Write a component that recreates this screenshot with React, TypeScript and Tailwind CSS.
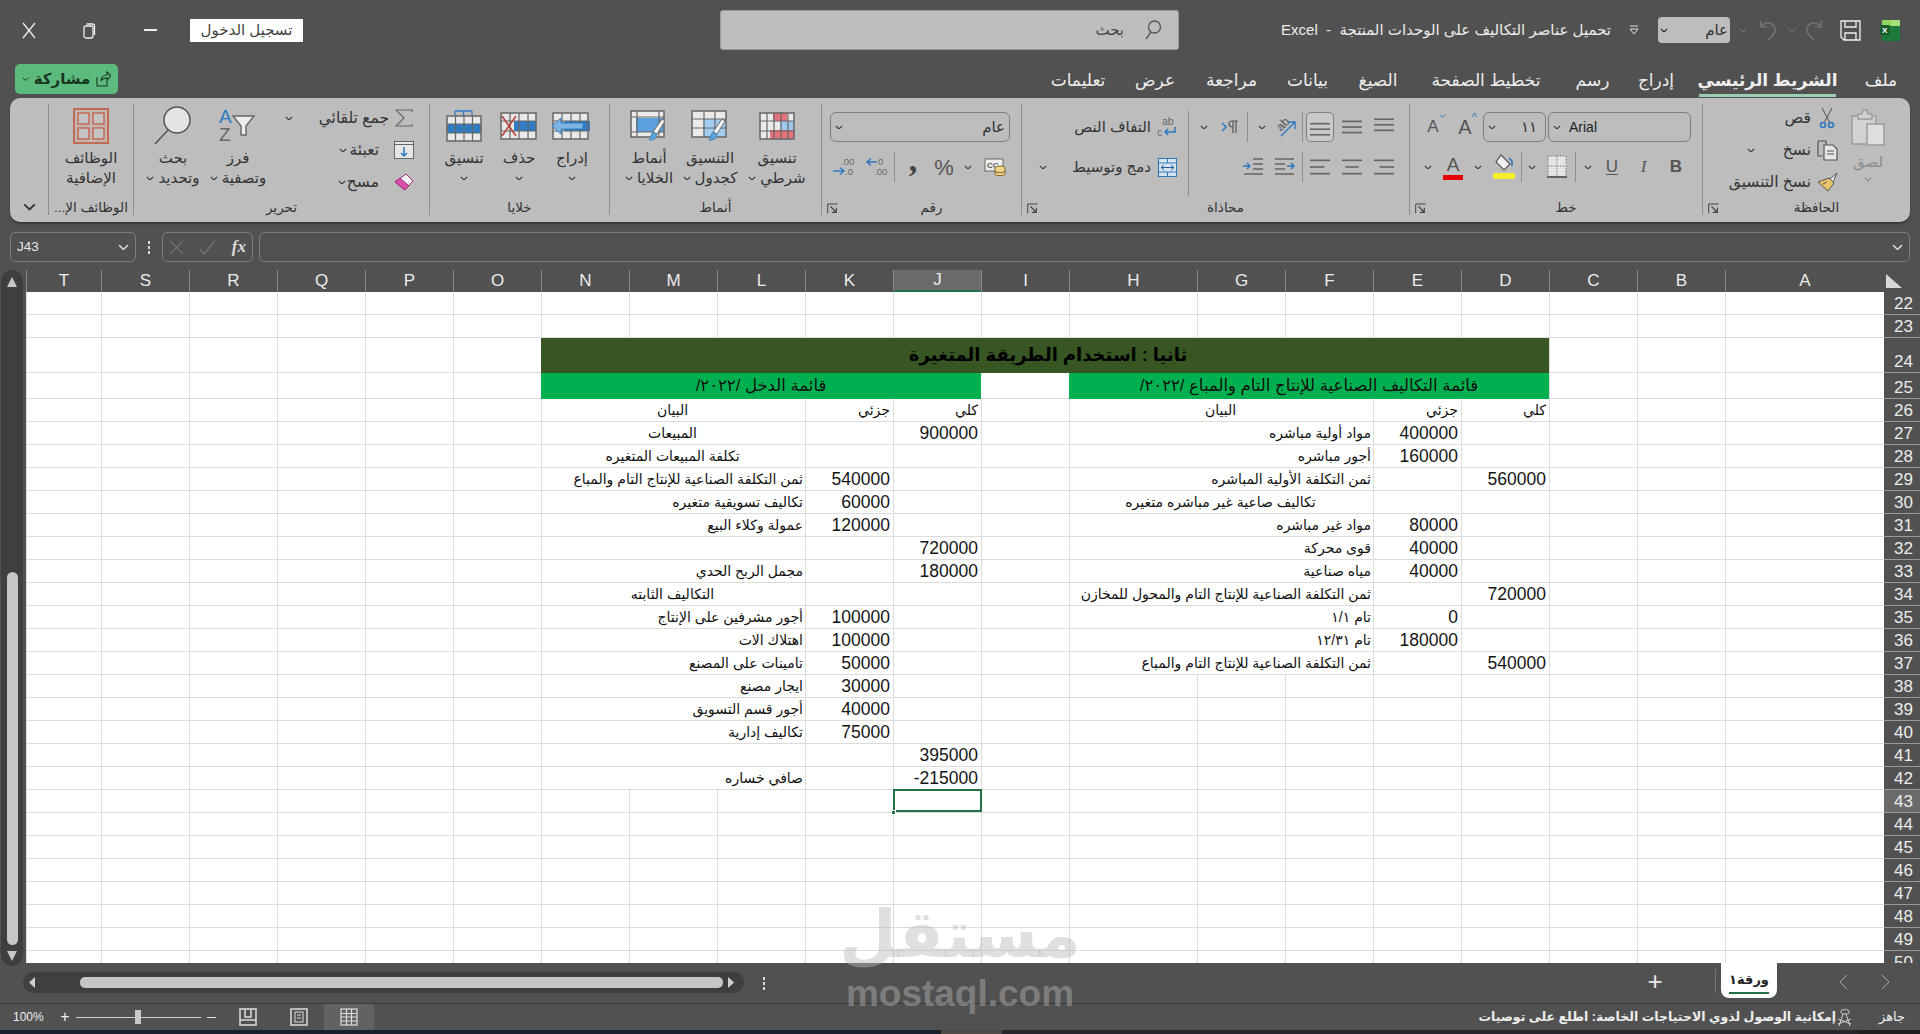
import React from "react";

const BL = "#2b78bf";

const Chev = ({ c = "#3a3a3a", w = 9 }: { c?: string; w?: number }) => (
  <svg width={w} height={w * 0.6} viewBox="0 0 10 6" fill="none"><path d="M1 1l4 4 4-4" stroke={c} strokeWidth="1.4" /></svg>
);
const Launcher = () => (
  <svg width="11" height="11" viewBox="0 0 11 11" fill="none"><path d="M10.5 1H.7v9.3" stroke="#444" /><path d="M3.5 3.5l5.5 5.5M9.3 4.8v4.5H4.8" stroke="#444" strokeWidth="1.2" /></svg>
);
const Slot = ({ className = "", children }: { className?: string; children?: React.ReactNode }) => (
  <div className={"flex items-center justify-center shrink-0 " + className}>{children}</div>
);
const Sep = ({ className = "" }: { className?: string }) => <div className={"w-px h-[30px] bg-[#8e8e8e] shrink-0 " + className} />;

const Lines = ({ ys, x = [[0, 18], [0, 18], [0, 18]] }: { ys: number[]; x?: number[][] }) => (
  <svg width="20" height="20" viewBox="0 0 18 18">
    {ys.map((y, i) => <line key={i} x1={x[i][0]} x2={x[i][1]} y1={y} y2={y} stroke="#666" strokeWidth="1.5" />)}
  </svg>
);

const Brush = ({ x = 0, y = 0, c = "#5ba3d9" }: { x?: number; y?: number; c?: string }) => (
  <g transform={`translate(${x} ${y})`}>
    <path d="M15 0l3 2-8 13-4-2z" fill="#f4f4f4" stroke="#666" strokeWidth="1" />
    <path d="M6 13l4 2.5c0 4-3 6-8 5.5 2-1.500 1.500-6 4-8z" fill={c} stroke="#3c7fb3" strokeWidth="0.8" />
  </g>
);

const GridLines = ({ x, y, w, h, cols, rows, s = "#666" }: { x: number; y: number; w: number; h: number; cols: number[]; rows: number[]; s?: string }) => (
  <g stroke={s} fill="none" strokeWidth="1.5">
    <rect x={x} y={y} width={w} height={h} />
    {cols.map((c) => <line key={c} x1={x + c} x2={x + c} y1={y} y2={y + h} strokeWidth="1.2" />)}
    {rows.map((r) => <line key={r} y1={y + r} y2={y + r} x1={x} x2={x + w} strokeWidth="1.2" />)}
  </g>
);

const IInsert = () => (
  <svg width="40" height="28" viewBox="0 0 40 28">
    <rect x="1" y="1" width="35" height="26" fill="#e8e8e8" />
    <rect x="12" y="9" width="26" height="10" fill="#2f7cc4" />
    <GridLines x={1} y={1} w={35} h={26} cols={[9, 18, 27]} rows={[8, 18]} />
    <path d="M0 14l9-8v5h22v6H9v5z" fill="#7fb3e0" stroke="#2f7cc4" />
  </svg>
);
const IDelete = () => (
  <svg width="38" height="28" viewBox="0 0 38 28">
    <rect x="1" y="1" width="35" height="26" fill="#e8e8e8" />
    <rect x="14" y="9" width="22" height="10" fill="#2f7cc4" />
    <GridLines x={1} y={1} w={35} h={26} cols={[9, 18, 27]} rows={[8, 18]} />
    <path d="M2 4l14 20M16 4L2 24" stroke="#b8443c" strokeWidth="1.6" />
  </svg>
);
const IFormat = () => (
  <svg width="36" height="32" viewBox="0 0 36 32">
    <path d="M9 1h17M17.500 1v5M9 5V1M26 5V1" stroke="#2f7cc4" strokeWidth="1.3" fill="none" />
    <rect x="1" y="6" width="34" height="25" fill="#e8e8e8" />
    <rect x="1" y="14" width="34" height="9" fill="#2f7cc4" />
    <GridLines x={1} y={6} w={34} h={25} cols={[8.5, 17, 25.5]} rows={[8, 17]} />
  </svg>
);
const ICond = () => (
  <svg width="36" height="28" viewBox="0 0 36 28">
    <rect x="1" y="1" width="34" height="26" fill="#eaeaea" />
    <rect x="14" y="1" width="14" height="8" fill="#e8727a" />
    <rect x="21" y="9" width="14" height="9" fill="#9fc9ec" />
    <rect x="11" y="18" width="24" height="9" fill="#e8727a" />
    <GridLines x={1} y={1} w={34} h={26} cols={[7, 14, 21, 28]} rows={[8, 18]} />
  </svg>
);
const ITable = () => (
  <svg width="38" height="32" viewBox="0 0 38 32">
    <rect x="1" y="1" width="34" height="26" fill="#eaeaea" />
    <rect x="12" y="9" width="23" height="18" fill="#a3cdf0" />
    <GridLines x={1} y={1} w={34} h={26} cols={[12, 23]} rows={[8, 17]} />
    <Brush x={16} y={9} />
  </svg>
);
const ICellS = () => (
  <svg width="38" height="32" viewBox="0 0 38 32">
    <rect x="1" y="1" width="33" height="26" fill="#eaeaea" />
    <rect x="6" y="8" width="28" height="14" fill="#5ba0dc" />
    <GridLines x={1} y={1} w={33} h={26} cols={[6, 28]} rows={[6, 21]} />
    <Brush x={17} y={9} />
  </svg>
);
const IPaste = () => (
  <svg width="36" height="40" viewBox="0 0 36 40" fill="none">
    <path d="M23 8h3v28H2V8h5" fill="#d2d2d2" stroke="#9c9c9c" strokeWidth="1.5" />
    <path d="M8 6h4l1-4h4l1 4h4v5H8z" fill="#d2d2d2" stroke="#9c9c9c" strokeWidth="1.5" />
    <rect x="17" y="16" width="17" height="21" fill="#dedede" stroke="#9c9c9c" strokeWidth="1.5" />
  </svg>
);
const IScissors = () => (
  <svg width="16" height="22" viewBox="0 0 16 22" fill="none">
    <path d="M3 1l7.500 14M13 1L5.500 15" stroke="#666" strokeWidth="1.2" />
    <circle cx="4" cy="18" r="2.500" stroke={BL} strokeWidth="1.600" />
    <circle cx="12" cy="18" r="2.500" stroke={BL} strokeWidth="1.600" />
  </svg>
);
const ICopy = () => (
  <svg width="21" height="21" viewBox="0 0 21 21" fill="none">
    <path d="M1 1h8v4M6 16H1V1" stroke="#555" strokeWidth="1.200" />
    <path d="M7 5h9l4 4v11H7z" fill="#e6e6e6" stroke="#555" strokeWidth="1.200" />
    <path d="M10 11h7M10 14h7" stroke="#555" />
  </svg>
);
const IPainter = () => (
  <svg width="21" height="20" viewBox="0 0 21 20" fill="none">
    <path d="M20 1l-7 6 3 3z" fill="#eee" stroke="#555" />
    <path d="M12 6l5 5-6 8-10-9z" fill="#e9c46a" stroke="#555" />
    <path d="M6 12l4-2" stroke="#555" />
  </svg>
);
const IFillColor = () => (
  <svg width="24" height="28" viewBox="0 0 24 28">
    <path d="M9 2l9 9-6 6-8-8z" fill="#eee" stroke="#555" strokeWidth="1.200" />
    <path d="M17 5l3 3v5" stroke={BL} strokeWidth="1.600" fill="none" />
    <rect x="1" y="20" width="22" height="6" fill="#f5f02e" />
  </svg>
);
const IBorders = () => (
  <svg width="20" height="24" viewBox="0 0 20 24">
    <rect x="1" y="1" width="18" height="20" fill="#e4e4e4" />
    <path d="M1 1h18M1 1v20M19 1v20M10 1v20M1 11h18" stroke="#777" strokeDasharray="1.500 1.500" fill="none" />
    <path d="M0 22h20" stroke="#444" strokeWidth="1.500" />
  </svg>
);
const IOrient = () => (
  <svg width="22" height="22" viewBox="0 0 22 22" fill="none">
    <text x="1" y="12" fontSize="12" fill="#555" transform="rotate(-45 8 8)" className="[font-family:'Liberation_Sans',sans-serif]">ab</text>
    <path d="M6 20L20 6M13 6h7v7" stroke={BL} strokeWidth="1.400" />
  </svg>
);
const IRtl = () => (
  <svg width="18" height="14" viewBox="0 0 18 14" fill="none">
    <path d="M1 3l4 4-4 4" stroke={BL} strokeWidth="1.500" />
    <path d="M11 1h6M11 1a3 3 0 000 6h1M12 1v12M15 1v12" stroke="#555" strokeWidth="1.200" />
  </svg>
);
const IIndent = ({ flip }: { flip?: boolean }) => (
  <svg width="20" height="18" viewBox="0 0 20 18" fill="none">
    {flip ? (
      <>
        <path d="M10 1h10M10 6h10M10 11h10M1 16h19" stroke="#666" strokeWidth="1.400" />
        <path d="M0 8h7M4 5l3 3-3 3" stroke={BL} strokeWidth="1.400" />
      </>
    ) : (
      <>
        <path d="M0 1h19M0 6h10M0 11h10M0 16h19" stroke="#666" strokeWidth="1.400" />
        <path d="M12 8h7M16 5l3 3-3 3" stroke={BL} strokeWidth="1.400" />
      </>
    )}
  </svg>
);
const IWrap = () => (
  <svg width="20" height="21" viewBox="0 0 20 21" fill="none">
    <text x="5" y="8" fontSize="10.500" fill="#666" className="[font-family:'Liberation_Sans',sans-serif]">ab</text>
    <text x="0" y="19" fontSize="10.500" fill="#666" className="[font-family:'Liberation_Sans',sans-serif]">c</text>
    <path d="M18 10v5h-10M11 12l-3 3 3 3" stroke={BL} strokeWidth="1.500" />
  </svg>
);
const IMerge = () => (
  <svg width="19" height="19" viewBox="0 0 19 19" fill="none">
    <rect x="0.500" y="0.500" width="18" height="18" fill="#d7e4f0" stroke={BL} />
    <path d="M0 5h19M0 14h19M9.500 0v5M9.500 14v5" stroke={BL} />
    <path d="M3 9.500h13M6 7l-3 2.500L6 12M13 7l3 2.500-3 2.500" stroke="#1d5f9c" />
  </svg>
);
const IAcct = () => (
  <svg width="22" height="18" viewBox="0 0 22 18" fill="none">
    <rect x="1" y="1" width="18" height="12" fill="#eee" stroke="#666" />
    <text x="3" y="10" fontSize="8" fontWeight="700" fill="#555" className="[font-family:'Liberation_Sans',sans-serif]">CC</text>
    <ellipse cx="16" cy="10" rx="5" ry="2" fill="#f2d68c" stroke="#7a6320" />
    <path d="M11 10v6c0 2 10 2 10 0v-6" fill="#f2d68c" stroke="#7a6320" />
    <path d="M11 13c0 2 10 2 10 0" stroke="#7a6320" />
  </svg>
);
const IDec = ({ inc }: { inc?: boolean }) => (
  <svg width="22" height="20" viewBox="0 0 22 20" fill="none">
    <text x={inc ? 8 : 12} y="8" fontSize="9.500" fill="#666" className="[font-family:'Liberation_Sans',sans-serif]">{inc ? ".00" : "0"}</text>
    <text x={inc ? 12 : 8} y="18" fontSize="9.500" fill="#666" className="[font-family:'Liberation_Sans',sans-serif]">{inc ? ".0" : ".00"}</text>
    {inc ? <path d="M0 14h11M7 10.500l4 3.500-4 3.500" stroke={BL} strokeWidth="1.300" /> : <path d="M1 5h10M5 1.500L1 5l4 3.500" stroke={BL} strokeWidth="1.300" />}
  </svg>
);
const ISum = () => (
  <svg width="18" height="18" viewBox="0 0 18 18" fill="none"><path d="M17 3V1H1l8 8-8 8h16v-2" stroke="#666" strokeWidth="1.200" /></svg>
);
const IFill = () => (
  <svg width="20" height="18" viewBox="0 0 20 18" fill="none">
    <rect x="0.500" y="0.500" width="19" height="17" fill="#e6e6e6" stroke="#666" />
    <path d="M0 3.500h20" stroke="#666" />
    <path d="M10 6v9M7 12l3 3 3-3" stroke={BL} strokeWidth="1.500" />
  </svg>
);
const IEraser = () => (
  <svg width="20" height="18" viewBox="0 0 20 18" fill="none">
    <path d="M12 1l7 7-8 9-10-8z" fill="#f1f1f1" stroke="#a02d7e" />
    <path d="M6 5l9 8-4 4-10-8z" fill="#d94fa7" stroke="#a02d7e" />
  </svg>
);
const ISort = () => (
  <svg width="38" height="38" viewBox="0 0 38 38" fill="none" className="[font-family:'Liberation_Sans',sans-serif]">
    <text x="0" y="16" fontSize="19" fill={BL}>A</text>
    <text x="0" y="34" fontSize="19" fill="#666">Z</text>
    <path d="M14 9h21l-8 10v9h-5V19z" fill="#ececec" stroke="#666" strokeWidth="1.400" />
  </svg>
);
const IFind = () => (
  <svg width="40" height="40" viewBox="0 0 40 40" fill="none">
    <circle cx="24" cy="14" r="13" fill="#e4e4e4" stroke="#555" strokeWidth="1.500" />
    <path d="M15 24L2 38" stroke="#555" strokeWidth="1.500" />
  </svg>
);
const IAddins = () => (
  <svg width="36" height="36" viewBox="0 0 36 36" fill="none">
    <rect x="1" y="1" width="34" height="34" stroke="#c36a54" strokeWidth="2" fill="#cfa99e" fillOpacity="0.3" />
    <rect x="5" y="5" width="11" height="11" stroke="#c36a54" strokeWidth="1.500" fill="#c4c4c4" />
    <rect x="20" y="5" width="11" height="11" stroke="#c36a54" strokeWidth="1.500" fill="#c4c4c4" />
    <rect x="5" y="20" width="11" height="11" stroke="#c36a54" strokeWidth="1.500" fill="#c4c4c4" />
    <rect x="20" y="20" width="11" height="11" stroke="#c36a54" strokeWidth="1.500" fill="#c4c4c4" />
  </svg>
);
const ISave = () => (
  <svg width="21" height="21" viewBox="0 0 21 21" fill="none">
    <path d="M1 1h19v19H4l-3-3z" stroke="#f0f0f0" strokeWidth="1.300" />
    <path d="M5 1v6h11V1M5 20v-7h11v7" stroke="#f0f0f0" strokeWidth="1.300" />
  </svg>
);
const IExcel = () => (
  <svg width="20" height="21" viewBox="0 0 20 21">
    <rect x="2" y="0" width="18" height="7" rx="1" fill="#8fd85c" />
    <rect x="11" y="0" width="9" height="7" rx="1" fill="#a7e07a" />
    <rect x="2" y="6" width="18" height="15" rx="1" fill="#1c7a3b" />
    <rect x="0" y="5" width="10" height="10" rx="1" fill="#185c2e" />
    <text x="2" y="13" fontSize="8" fontWeight="700" fill="#fff" className="[font-family:'Liberation_Sans',sans-serif]">X</text>
  </svg>
);

const Big = ({ className = "", icon, l1, l2, chev }: { className?: string; icon: React.ReactNode; l1: string; l2?: string; chev?: boolean }) => (
  <div className={"flex flex-col items-center shrink-0 whitespace-nowrap text-[15px] text-[#333] " + className}>
    <div className="h-[44px] flex items-center justify-center">{icon}</div>
    <div className="h-[20px] leading-[20px]">{l1}</div>
    <div className="h-[20px] leading-[20px] flex items-center gap-[4px]">
      {l2 && <span>{l2}</span>}
      {chev && <Chev w={8} />}
    </div>
  </div>
);

const Group = ({ className = "", label, launcher, children }: { className?: string; label: string; launcher?: boolean; children: React.ReactNode }) => (
  <div className={"shrink-0 h-[111px] border-l border-[#8e8e8e] flex flex-col " + className}>
    <div className="h-[98px] flex">{children}</div>
    <div className="h-[13px] flex items-center text-[13.500px] text-[#333]">
      <div className="flex-1 text-center whitespace-nowrap">{label}</div>
      {launcher && <Slot className="w-[20px]"><Launcher /></Slot>}
    </div>
  </div>
);

const Small = ({ icon, text, tw, chev, cw, pad = "" }: { icon: React.ReactNode; text: string; tw: string; chev?: boolean; cw?: string; pad?: string }) => (
  <div className="h-[24px] flex items-center text-[15.500px] text-[#333] whitespace-nowrap">
    <Slot className={pad}>{icon}</Slot>
    <span className={tw}>{text}</span>
    {chev && <Slot className={cw}><Chev w={8} /></Slot>}
  </div>
);

const Box = ({ className = "", children }: { className?: string; children: React.ReactNode }) => (
  <div className={"h-[30px] shrink-0 rounded-[6px] border border-[#7f7f7f] flex items-center justify-between px-[4px] " + className}>{children}</div>
);

const Ribbon = () => (
  <div className="mx-[10px] h-[124px] rounded-[10px] bg-[#bdbdbd] pt-[6px] flex shadow-[0_2px_2px_rgba(0,0,0,0.3)]">
    <Group className="w-[208px]" label="الحافظة" launcher>
      <div className="mr-[22px] w-[40px] shrink-0 flex flex-col items-center pt-[4px] text-[#8b8b8b] text-[15px]">
        <IPaste />
        <div className="mt-[5px] leading-[18px]">لصق</div>
        <div className="mt-[6px]"><Chev c="#8b8b8b" w={8} /></div>
      </div>
      <div className="pr-[10px] pt-[2px] flex flex-col gap-[8px]">
        <Small icon={<IScissors />} text="قص" tw="" pad="w-[22px] ml-[5px]" />
        <Small icon={<ICopy />} text="نسخ" tw="w-[55px]" chev cw="w-[10px]" pad="w-[22px] ml-[5px]" />
        <Small icon={<IPainter />} text="نسخ التنسيق" tw="" pad="w-[22px] ml-[5px]" />
      </div>
    </Group>
    <Group className="w-[293px]" label="خط" launcher>
      <div className="pt-[8px] flex flex-col gap-[10px]">
        <div className="flex">
          <Box className="mr-[11px] w-[143px] flex-row-reverse [font-family:'Liberation_Sans',sans-serif] text-[14px] text-[#222]">
            <span dir="ltr" className="flex items-center gap-[8px]"><Chev w={8} /><span>Arial</span></span>
            <span />
          </Box>
          <Box className="mr-[2px] w-[63px]">
            <span className="text-[15px] text-[#333] mr-[4px]">١١</span>
            <Chev w={8} />
          </Box>
          <Slot className="w-[32px] mr-[2px] text-[#555] text-[20px] h-[30px] [font-family:'Liberation_Sans',sans-serif]">
            <span className="relative">A<span className="absolute left-full top-[-3px] text-[11px] text-[#2b78bf]">^</span></span>
          </Slot>
          <Slot className="w-[32px] text-[#555] text-[17px] h-[30px] [font-family:'Liberation_Sans',sans-serif]">
            <span className="relative">A<span className="absolute left-full top-[0px]"><Chev c={BL} w={7} /></span></span>
          </Slot>
        </div>
        <div className="flex h-[30px] items-center pr-[10px]">
          <Slot className="w-[32px] font-bold text-[17px] text-[#555] [font-family:'Liberation_Sans',sans-serif]">B</Slot>
          <Slot className="w-[33px] italic text-[17px] text-[#555] [font-family:'Liberation_Serif',serif]">I</Slot>
          <Slot className="w-[30px] underline underline-offset-2 text-[17px] text-[#555] [font-family:'Liberation_Sans',sans-serif]">U</Slot>
          <Slot className="w-[18px]"><Chev w={8} /></Slot>
          <Sep className="mr-[3px]" />
          <Slot className="w-[36px]"><IBorders /></Slot>
          <Slot className="w-[14px]"><Chev w={8} /></Slot>
          <Sep className="mr-[3px]" />
          <Slot className="w-[34px]"><IFillColor /></Slot>
          <Slot className="w-[18px]"><Chev w={8} /></Slot>
          <Slot className="w-[32px] flex-col leading-none text-[19px] text-[#555] [font-family:'Liberation_Sans',sans-serif]">
            A
            <span className="w-[20px] h-[5px] bg-[#e30000] mt-[1px]" />
          </Slot>
          <Slot className="w-[18px]"><Chev w={8} /></Slot>
        </div>
      </div>
    </Group>
    <Group className="w-[388px]" label="محاذاة" launcher>
      <div className="w-[221px] h-[85px] shrink-0 border-l border-[#8e8e8e] mt-[7px] pt-[1px] flex flex-col gap-[10px]">
        <div className="flex h-[30px] items-center pr-[9px]">
          <Slot className="w-[32px]"><Lines ys={[2, 7, 12]} /></Slot>
          <Slot className="w-[32px]"><Lines ys={[4, 9, 14]} /></Slot>
          <Slot className="w-[28px] h-[30px] mr-[2px] rounded-[5px] bg-[#c9c9c9] border border-[#7f7f7f]"><Lines ys={[6, 11, 16]} /></Slot>
          <Sep className="mr-[3px]" />
          <Slot className="w-[32px]"><IOrient /></Slot>
          <Slot className="w-[16px]"><Chev w={8} /></Slot>
          <Sep className="mr-[6px]" />
          <Slot className="w-[34px]"><IRtl /></Slot>
          <Slot className="w-[18px]"><Chev w={8} /></Slot>
        </div>
        <div className="flex h-[30px] items-center pr-[9px]">
          <Slot className="w-[32px]"><Lines ys={[3, 9, 15]} x={[[0, 18], [5, 18], [0, 18]]} /></Slot>
          <Slot className="w-[32px]"><Lines ys={[3, 9, 15]} x={[[0, 18], [3, 15], [0, 18]]} /></Slot>
          <Slot className="w-[32px]"><Lines ys={[3, 9, 15]} x={[[0, 18], [0, 13], [0, 18]]} /></Slot>
          <Sep className="mr-[1px]" />
          <Slot className="w-[34px]"><IIndent /></Slot>
          <Slot className="w-[30px]"><IIndent flip /></Slot>
        </div>
      </div>
      <div className="pt-[8px] flex flex-col gap-[10px] text-[15px] text-[#333] whitespace-nowrap">
        <div className="flex h-[30px] items-center pr-[5px]">
          <Slot className="w-[32px]"><IWrap /></Slot>
          <span>التفاف النص</span>
        </div>
        <div className="flex h-[30px] items-center pr-[5px]">
          <Slot className="w-[32px]"><IMerge /></Slot>
          <span className="w-[94px]">دمج وتوسيط</span>
          <Slot className="w-[28px]"><Chev w={8} /></Slot>
        </div>
      </div>
    </Group>
    <Group className="w-[200px]" label="رقم" launcher>
      <div className="pt-[8px] flex flex-col gap-[10px]">
        <Box className="mr-[11px] w-[180px] text-[15px] text-[#333]">
          <span>عام</span>
          <Chev w={8} />
        </Box>
        <div className="flex h-[30px] items-center pr-[10px]">
          <Slot className="w-[32px]"><IAcct /></Slot>
          <Slot className="w-[22px]"><Chev w={8} /></Slot>
          <Slot className="w-[26px] text-[22px] text-[#555] [font-family:'Liberation_Sans',sans-serif]">%</Slot>
          <Slot className="w-[36px] text-[34px] font-bold leading-none pb-[14px] text-[#444] [font-family:'Liberation_Serif',serif]">,</Slot>
          <Sep />
          <Slot className="w-[34px]"><IDec /></Slot>
          <Slot className="w-[32px]"><IDec inc /></Slot>
        </div>
      </div>
    </Group>
    <Group className="w-[212px]" label="أنماط">
      <div className="pr-[11px] flex">
        <Big className="w-[66px]" icon={<ICond />} l1="تنسيق" l2="شرطي" chev />
        <Big className="w-[68px]" icon={<ITable />} l1="التنسيق" l2="كجدول" chev />
        <Big className="w-[54px]" icon={<ICellS />} l1="أنماط" l2="الخلايا" chev />
      </div>
    </Group>
    <Group className="w-[180px]" label="خلايا">
      <div className="pr-[10px] flex">
        <Big className="w-[54px]" icon={<IInsert />} l1="إدراج" chev />
        <Big className="w-[52px]" icon={<IDelete />} l1="حذف" chev />
        <Big className="w-[58px]" icon={<IFormat />} l1="تنسيق" chev />
      </div>
    </Group>
    <Group className="w-[296px]" label="تحرير">
      <div className="mr-[12px] w-[139px] shrink-0 pt-[2px] flex flex-col gap-[8px]">
        <Small icon={<ISum />} text="جمع تلقائي" tw="w-[89px] mr-[2px]" chev cw="w-[22px]" pad="w-[26px]" />
        <Small icon={<IFill />} text="تعبئة" tw="w-[30px] mr-[12px]" chev cw="w-[12px]" pad="w-[26px]" />
        <Small icon={<IEraser />} text="مسح" tw="w-[27px] mr-[12px]" chev cw="w-[20px]" pad="w-[26px]" />
      </div>
      <Big className="w-[80px]" icon={<ISort />} l1="فرز" l2="وتصفية" chev />
      <Big className="w-[50px]" icon={<IFind />} l1="بحث" l2="وتحديد" chev />
    </Group>
    <Group className="w-[85px]" label="الوظائف الإ...">
      <Big className="w-full" icon={<IAddins />} l1="الوظائف" l2="الإضافية" />
    </Group>
    <div className="flex-1 flex items-end justify-center pb-[11px]"><Chev c="#333" w={13} /></div>
  </div>
);

const TopBar = () => (
  <div className="h-[60px] flex items-center text-[#ececec] whitespace-nowrap">
    <Slot className="mr-[18px] w-[24px]"><IExcel /></Slot>
    <Slot className="mr-[14px] w-[28px]"><ISave /></Slot>
    <Slot className="mr-[4px] w-[34px]">
      <svg width="22" height="22" viewBox="0 0 22 22" fill="none"><path d="M17 2v6h-6M17 8C13 2 4 3 3 10c-1 4 3 7 7 11" stroke="#727272" strokeWidth="1.600" /></svg>
    </Slot>
    <Slot className="w-[12px]"><Chev c="#727272" w={8} /></Slot>
    <Slot className="w-[38px]">
      <svg width="22" height="22" viewBox="0 0 22 22" fill="none"><path d="M5 2v6h6M5 8c4-6 13-5 14 2 1 4-3 7-7 11" stroke="#727272" strokeWidth="1.600" /></svg>
    </Slot>
    <Slot className="w-[10px]"><Chev c="#727272" w={8} /></Slot>
    <div className="mr-[8px] w-[72px] h-[26px] shrink-0 rounded-[4px] bg-[#bdbdbd] flex items-center justify-between px-[2px] text-[#333] text-[15px]">
      <span>عام</span>
      <Chev c="#222" w={8} />
    </div>
    <Slot className="mr-[14px] w-[20px]">
      <svg width="10" height="10" viewBox="0 0 10 10" fill="none"><path d="M1 1h8" stroke="#ddd" /><path d="M1 4h8L5 9z" fill="none" stroke="#ddd" /></svg>
    </Slot>
    <div className="mr-[13px] w-[330px] shrink-0 text-[15px] text-right">تحميل عناصر التكاليف على الوحدات المنتجة&nbsp; - &nbsp;Excel</div>
    <div className="mr-[102px] w-[459px] h-[40px] shrink-0 rounded-[3px] bg-[#bdbdbd] border border-[#9a9a9a] flex items-center text-[#444] text-[15px]">
      <Slot className="w-[50px]">
        <svg width="18" height="20" viewBox="0 0 18 20" fill="none"><circle cx="10.500" cy="7" r="6" stroke="#555" strokeWidth="1.300" /><path d="M7 12L2 19" stroke="#555" strokeWidth="1.300" /></svg>
      </Slot>
      <span className="mr-[4px]">بحث</span>
    </div>
    <div className="mr-[417px] w-[113px] h-[23px] shrink-0 bg-white text-[#444] text-[15px] flex items-center justify-center">تسجيل الدخول</div>
    <Slot className="mr-[25px] w-[30px]"><span className="w-[13px] h-[1.500px] bg-[#eee]" /></Slot>
    <Slot className="mr-[31px] w-[30px]">
      <svg width="13" height="17" viewBox="0 0 13 17" fill="none"><rect x="1" y="4" width="9" height="12" rx="2" stroke="#eee" strokeWidth="1.300" /><path d="M3.500 2h6a2 2 0 012 2v9" stroke="#eee" strokeWidth="1.300" /></svg>
    </Slot>
    <Slot className="mr-[30px] w-[30px]">
      <svg width="14" height="17" viewBox="0 0 14 17" fill="none"><path d="M1 1l12 15M13 1L1 16" stroke="#eee" strokeWidth="1.300" /></svg>
    </Slot>
  </div>
);

const tabs: [string, string, boolean?][] = [
  ["ملف", "mr-[23px] w-[32px]"],
  ["الشريط الرئيسي", "mr-[29px] w-[137px]", true],
  ["إدراج", "mr-[27px] w-[32px]"],
  ["رسم", "mr-[29px] w-[37px]"],
  ["تخطيط الصفحة", "mr-[35px] w-[106px]"],
  ["الصيغ", "mr-[35px] w-[40px]"],
  ["بيانات", "mr-[31px] w-[39px]"],
  ["مراجعة", "mr-[32px] w-[49px]"],
  ["عرض", "mr-[33px] w-[38px]"],
  ["تعليمات", "mr-[31px] w-[54px]"],
];

const Tabs = () => (
  <div className="h-[38px] flex items-center pt-[4px] text-[17px] text-[#eeeeee] whitespace-nowrap">
    {tabs.map(([t, c, a]) => (
      <div key={t} className={"relative h-[30px] shrink-0 flex items-center justify-center " + c + (a ? " font-bold" : "")}>
        {t}
        {a && <span className="absolute left-0 right-0 bottom-[-1px] h-[3px] bg-[#9ccfb2]" />}
      </div>
    ))}
    <div className="mr-auto ml-[15px] mt-[-4px] w-[103px] h-[30px] rounded-[5px] bg-[#5cbb7c] text-[#17361f] font-bold text-[15px] flex items-center justify-between px-[7px]">
      <svg width="16" height="16" viewBox="0 0 16 16" fill="none"><path d="M2 6v9h10V9M6 10c0-4 3-6 6-6V1l4 4-4 4V7c-3 0-5 1-6 3z" stroke="#17361f" strokeWidth="1.100" /></svg>
      <span>مشاركة</span>
      <Chev c="#17361f" w={7} />
    </div>
  </div>
);

const FormulaBar = () => (
  <div className="mt-[10px] h-[30px] flex pr-[10px] pl-[10px] text-[#e6e6e6]">
    <div className="flex-1 rounded-[5px] border border-[#7c7c7c] flex items-center pr-[6px]"><Chev c="#d4d4d4" w={11} /></div>
    <div dir="ltr" className="mr-[6px] w-[91px] shrink-0 rounded-[5px] border border-[#7c7c7c] flex items-center justify-between px-[6px]">
      <svg width="15" height="15" viewBox="0 0 15 15" fill="none"><path d="M1 1l13 13M14 1L1 14" stroke="#868686" /></svg>
      <svg width="17" height="15" viewBox="0 0 17 15" fill="none"><path d="M1 9l4 5L16 1" stroke="#868686" /></svg>
      <span className="italic font-bold text-[17px] text-[#dcdcdc] [font-family:'Liberation_Serif',serif]">fx</span>
    </div>
    <Slot className="w-[26px] flex-col gap-[2px]">
      <span className="w-[2px] h-[3px] bg-[#ddd]" /><span className="w-[2px] h-[3px] bg-[#ddd]" /><span className="w-[2px] h-[3px] bg-[#ddd]" />
    </Slot>
    <div dir="ltr" className="w-[126px] shrink-0 rounded-[5px] border border-[#7c7c7c] flex items-center justify-between px-[6px] text-[13.500px] [font-family:'Liberation_Sans',sans-serif]">
      <span>J43</span><Chev c="#d4d4d4" w={11} />
    </div>
  </div>
);

type Row = { D?: string; E?: string; F?: string; Fc?: boolean; J?: string; K?: string; L?: string; Lc?: boolean };
const data: Record<number, Row> = {
  26: { D: "كلي", E: "جزئي", F: "البيان", Fc: true, J: "كلي", K: "جزئي", L: "البيان", Lc: true },
  27: { E: "400000", F: "مواد أولية مباشره", J: "900000", L: "المبيعات", Lc: true },
  28: { E: "160000", F: "أجور مباشره", L: "تكلفة المبيعات المتغيره", Lc: true },
  29: { D: "560000", F: "ثمن التكلفة الأولية المباشره", K: "540000", L: "ثمن التكلفة الصناعية للإنتاج التام والمباع" },
  30: { F: "تكاليف صاعية غير مباشره متغيره", Fc: true, K: "60000", L: "تكاليف تسويقية متغيره" },
  31: { E: "80000", F: "مواد غير مباشره", K: "120000", L: "عمولة وكلاء البيع" },
  32: { E: "40000", F: "قوى محركة", J: "720000" },
  33: { E: "40000", F: "مياه صناعية", J: "180000", L: "مجمل الربح الحدي" },
  34: { D: "720000", F: "ثمن التكلفة الصناعية للإنتاج التام والمحول للمخازن", L: "التكاليف الثابته", Lc: true },
  35: { E: "0", F: "تام ١/١", K: "100000", L: "أجور مشرفين على الإنتاج" },
  36: { E: "180000", F: "تام ١٢/٣١", K: "100000", L: "اهتلاك الات" },
  37: { D: "540000", F: "ثمن التكلفة الصناعية للإنتاج التام والمباع", K: "50000", L: "تامينات على المصنع" },
  38: { K: "30000", L: "ايجار مصنع" },
  39: { K: "40000", L: "أجور قسم التسويق" },
  40: { K: "75000", L: "تكاليف إدارية" },
  41: { J: "395000" },
  42: { J: "-215000", L: "صافي خساره" },
};

const colNames = ["A", "B", "C", "D", "E", "F", "G", "H", "I", "J", "K", "L", "M", "N", "O", "P", "Q", "R", "S", "T"];
const line = "border-b border-l border-[#dcdcdc]";

const NumCell = ({ v }: { v?: string }) => {
  if (!v) return <div className={line} />;
  const numeric = /[0-9]/.test(v);
  return numeric ? (
    <div dir="ltr" className={line + " flex items-end justify-end pr-[3px] text-[17.500px] leading-[21px] text-[#151515] [font-family:'Liberation_Sans',sans-serif]"}>{v}</div>
  ) : (
    <div className={line + " flex items-end justify-start pr-[3px] text-[14px] leading-[22px] text-[#111]"}>{v}</div>
  );
};
const TextCell = ({ v, c }: { v?: string; c?: boolean }) => (
  <div className={"col-span-3 flex items-end pr-[2px] text-[14px] leading-[21px] text-[#111] whitespace-nowrap " + line + (c ? " justify-center" : " justify-start")}>{v}</div>
);

const rowsAll = Array.from({ length: 29 }, (_, i) => 22 + i);

const renderRow = (r: number) => {
  const out: React.ReactNode[] = [];
  const d = data[r] || {};
  for (let i = 0; i < colNames.length; i++) {
    const c = colNames[i];
    const k = r + c;
    if (r === 24 && c === "D") {
      out.push(<div key={k} className="col-span-11 bg-[#375623] pl-[6px] flex items-center justify-center text-[#000] font-bold text-[18px] whitespace-nowrap">ثانيا : استخدام الطريقة المتغيرة</div>);
      i += 10;
      continue;
    }
    if (r === 25 && c === "D") {
      out.push(<div key={k} className="col-span-5 bg-[#00b050] pb-[1px] flex items-center justify-center text-[#111] text-[16.500px] whitespace-nowrap">قائمة التكاليف الصناعية للإنتاج التام والمباع /٢٠٢٢/</div>);
      i += 4;
      continue;
    }
    if (r === 25 && c === "J") {
      out.push(<div key={k} className="col-span-5 bg-[#00b050] pb-[1px] flex items-center justify-center text-[#111] text-[16.500px] whitespace-nowrap">قائمة الدخل /٢٠٢٢/</div>);
      i += 4;
      continue;
    }
    if (r === 25 && c === "I") {
      out.push(<div key={k} className="border-b border-[#dcdcdc]" />);
      continue;
    }
    if (r >= 26 && r <= 37 && c === "F") {
      out.push(<TextCell key={k} v={d.F} c={d.Fc} />);
      i += 2;
      continue;
    }
    if (r >= 26 && r <= 42 && c === "L") {
      out.push(<TextCell key={k} v={d.L} c={d.Lc} />);
      i += 2;
      continue;
    }
    if (r === 43 && c === "J") {
      out.push(
        <div key={k} className={"relative " + line}>
          <div className="absolute -top-[1px] bottom-0 -left-[1px] -right-[1px] border-2 border-[#217346]" />
          <div className="absolute -bottom-[3px] -left-[3px] w-[5px] h-[5px] bg-[#217346] border border-white" />
        </div>
      );
      continue;
    }
    if (c === "D" || c === "E" || c === "J" || c === "K") {
      out.push(<NumCell key={k} v={(d as Record<string, string | undefined>)[c]} />);
      continue;
    }
    out.push(<div key={k} className={line} />);
  }
  return out;
};

const Sheet = () => (
  <div className="w-[1894px] h-[693px] shrink-0 overflow-hidden bg-white grid grid-cols-[36px_159px_88px_88px_88px_88px_88px_88px_128px_88px_88px_88px_88px_88px_88px_88px_88px_88px_88px_88px_75px] grid-rows-[22px_23px_23px_35px_26px_repeat(25,23px)]">
    <div className="bg-[#515151] flex items-center pr-[17px]">
      <svg width="18" height="15" viewBox="0 0 18 15" className="shrink-0"><path d="M0 0l16 14H0z" fill="#d8d8d8" transform="translate(1 0)" /></svg>
    </div>
    {colNames.map((c) => (
      <div key={c} className={"border-l border-[#8a8a8a] flex items-center justify-center text-[17px] text-[#ececec] [font-family:'Liberation_Sans',sans-serif] " + (c === "J" ? "bg-[#6a6a6a] border-b-2 border-b-[#217346]" : "bg-[#515151]")}>{c}</div>
    ))}
    {rowsAll.map((r) => (
      <React.Fragment key={r}>
        <div className={"border-b border-[#9a9a9a] flex items-end justify-start pr-[7px] text-[17px] leading-[21px] text-[#ececec] [font-family:'Liberation_Sans',sans-serif] " + (r === 43 ? "bg-[#6a6a6a]" : "bg-[#515151]")}>{r}</div>
        {renderRow(r)}
      </React.Fragment>
    ))}
  </div>
);

const VScroll = () => (
  <div className="w-[22px] mr-[3px] h-[696px] rounded-[11px] bg-[#3f3f3f] flex flex-col items-center shrink-0 z-10">
    <svg width="10" height="10" viewBox="0 0 10 10" className="mt-[7px]"><path d="M5 0l5 10H0z" fill="#c8c8c8" /></svg>
    <div className="w-[11px] h-[373px] mt-[285px] rounded-full bg-[#c6c6c6]" />
    <svg width="10" height="10" viewBox="0 0 10 10" className="mt-[6px]"><path d="M5 10l5-10H0z" fill="#c8c8c8" /></svg>
  </div>
);

const SheetTabs = () => (
  <div className="h-[40px] flex items-start">
    <Slot className="mr-[25px] w-[20px] h-[36px] pt-[2px]">
      <svg width="9" height="16" viewBox="0 0 9 16" fill="none"><path d="M1 1l7 7-7 7" stroke="#a8a8a8" /></svg>
    </Slot>
    <Slot className="mr-[22px] w-[20px] h-[36px] pt-[2px]">
      <svg width="9" height="16" viewBox="0 0 9 16" fill="none"><path d="M8 1L1 8l7 7" stroke="#a8a8a8" /></svg>
    </Slot>
    <div className="mr-[56px] w-[56px] h-[35px] shrink-0 rounded-b-[8px] bg-white flex items-center justify-center font-bold text-[13px] text-[#222]">
      <span className="border-b-[2px] border-[#217346] leading-[24px]">ورقة١</span>
    </div>
    <div className="mr-[5px] mt-[6px] w-px h-[24px] bg-[#777]" />
    <Slot className="mr-[45px] w-[30px] h-[36px] text-[#e8e8e8] text-[26px] font-light [font-family:'Liberation_Sans',sans-serif]">+</Slot>
    <Slot className="mr-[866px] w-[20px] h-[40px] flex-col gap-[2px]">
      <span className="w-[2px] h-[3px] bg-[#ddd]" /><span className="w-[2px] h-[3px] bg-[#ddd]" /><span className="w-[2px] h-[3px] bg-[#ddd]" />
    </Slot>
    <div dir="ltr" className="mr-[10px] mt-[9px] w-[721px] h-[21px] shrink-0 rounded-full bg-[#3f3f3f] flex items-center pl-[6px]">
      <svg width="6" height="11" viewBox="0 0 6 11"><path d="M0 5.500L6 0v11z" fill="#d0d0d0" /></svg>
      <div className="ml-[45px] w-[643px] h-[11px] rounded-[5px] bg-[#c6c6c6]" />
      <svg width="6" height="11" viewBox="0 0 6 11" className="ml-[5px]"><path d="M6 5.500L0 0v11z" fill="#d0d0d0" /></svg>
    </div>
  </div>
);

const StatusBar = () => (
  <div className="h-[27px] border-t border-[#3a3a3a] flex items-center text-[#eeeeee]">
    <div className="mr-[15px] w-[25px] text-[13px] shrink-0">جاهز</div>
    <Slot className="mr-[25px] w-[22px]">
      <svg width="17" height="20" viewBox="0 0 17 20" fill="none" stroke="#ddd" strokeWidth="0.900">
        <path d="M5 4a2 2 0 013-1 2 2 0 013 0 2 2 0 012 3c-1 1-3 1-3 1H7S4 6 5 4z" />
        <path d="M7 7L3 19M10 7l4 12M2 12l13 5M15 12L2 17" />
      </svg>
    </Slot>
    <div className="mr-[-3px] text-[12.500px] font-bold whitespace-nowrap">إمكانية الوصول لذوي الاحتياجات الخاصة: اطلع على توصيات</div>
    <div dir="ltr" className="mr-auto flex items-center h-full text-[12px]">
      <div className="ml-[13px] w-[32px] shrink-0 [font-family:'Liberation_Sans',sans-serif]">100%</div>
      <Slot className="ml-[12px] w-[16px] text-[16px] [font-family:'Liberation_Sans',sans-serif]">+</Slot>
      <div className="ml-[3px] relative w-[125px] h-px bg-[#cfcfcf]">
        <span className="absolute left-[59px] -top-[7px] w-[6px] h-[14px] bg-[#c8c8c8]" />
      </div>
      <Slot className="ml-[2px] w-[16px]"><span className="w-[9px] h-px bg-[#e6e6e6]" /></Slot>
      <Slot className="ml-[4px] w-[50px] h-full">
        <svg width="18" height="18" viewBox="0 0 18 18" fill="none" stroke="#ddd" strokeWidth="1.500"><rect x="1" y="1" width="16" height="16" /><path d="M1 12h16M6 1v8h6V1" /></svg>
      </Slot>
      <Slot className="ml-[1px] w-[50px] h-full">
        <svg width="18" height="18" viewBox="0 0 18 18" fill="none" stroke="#ddd" strokeWidth="1.500"><rect x="1" y="1" width="16" height="16" /><rect x="5" y="4" width="8" height="10" strokeWidth="1" /><path d="M7 7h4M7 10h4" strokeWidth="1" /></svg>
      </Slot>
      <Slot className="w-[50px] h-full bg-[#626262]">
        <svg width="18" height="18" viewBox="0 0 18 18" fill="none" stroke="#ddd" strokeWidth="1.200"><rect x="1" y="1" width="16" height="16" /><path d="M1 5.500h16M1 9h16M1 13h16M6.500 1v16M11.500 1v16" /></svg>
      </Slot>
    </div>
  </div>
);

export default function App() {
  return (
    <div dir="rtl" className="relative w-[1920px] h-[1034px] overflow-hidden bg-[#515151] [font-family:'Liberation_Sans','DejaVu_Sans',sans-serif] [&_svg]:[direction:ltr]">
      <TopBar />
      <Tabs />
      <Ribbon />
      <FormulaBar />
      <div className="mt-[8px] h-[693px] flex">
        <Sheet />
        <VScroll />
      </div>
      <SheetTabs />
      <StatusBar />
      <div className="h-[4px] flex flex-row-reverse">
        <div className="flex-1 bg-[#16202b]" />
        <div className="w-[61px] bg-[#4e4a46]" />
        <div className="w-[857px] bg-[#25272a]" />
        <div className="w-[61px] bg-[#1f1f1f]" />
      </div>
      <div dir="ltr" className="absolute left-[845px] top-[893px] w-[230px] flex flex-col items-center pointer-events-none text-[#b7b7b7]/45">
        <div dir="rtl" className="text-[66px] leading-[82px] font-bold whitespace-nowrap">مستقل</div>
        <div className="text-[37px] leading-[38px] font-bold">mostaql.com</div>
      </div>
    </div>
  );
}
